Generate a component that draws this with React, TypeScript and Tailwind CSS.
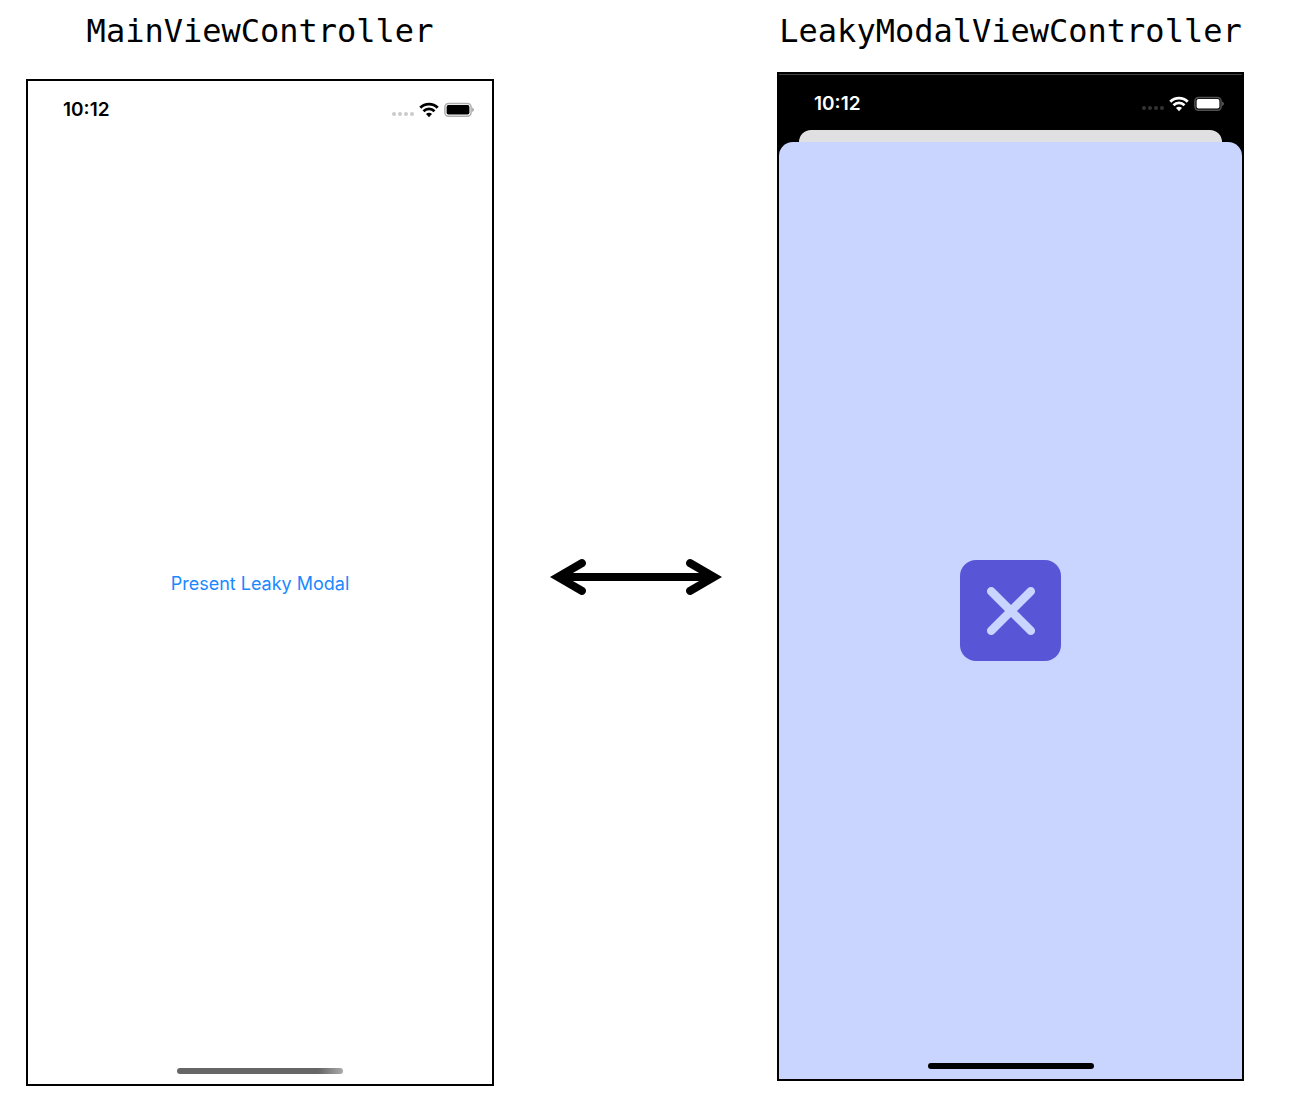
import type { ReactNode } from "react";

function Battery() {
  return (
    <svg width="30" height="16" viewBox="0 0 30 16" aria-label="Battery full" role="img">
      <rect x="0.9" y="1.4" width="26.2" height="12.8" rx="3.6" fill="none" stroke="currentColor" strokeOpacity="0.32" strokeWidth="1.5" />
      <rect x="2.6" y="3.1" width="22.8" height="9.4" rx="1.8" fill="currentColor" />
      <path d="M28.3 5.6 C30.2 6.4 30.2 9.2 28.3 10 Z" fill="currentColor" fillOpacity="0.45" />
    </svg>
  );
}

function Wifi() {
  return (
    <svg width="20" height="16" viewBox="0 0 20 16" fill="none" stroke="currentColor" aria-label="Wi-Fi" role="img">
      <path d="M1.3 5.8 A12.2 12.2 0 0 1 18.7 5.8" strokeWidth="2.9" />
      <path d="M4.5 9.2 A7.7 7.7 0 0 1 15.5 9.2" strokeWidth="2.7" />
      <path d="M10 15.2 L7 12.1 A4.2 4.2 0 0 1 13 12.1 Z" fill="currentColor" stroke="none" />
    </svg>
  );
}

function StatusBar() {
  return (
    <div className="flex shrink-0 items-center justify-between pt-[17px] pr-[18px] pb-[14px] pl-[35px]">
      <time className="text-[19px] leading-6 font-semibold">10:12</time>
      <div className="flex items-center">
        <div className="mt-2 mr-[5px] flex gap-[2px] opacity-20">
          <span className="size-1 rounded-full bg-current" />
          <span className="size-1 rounded-full bg-current" />
          <span className="size-1 rounded-full bg-current" />
          <span className="size-1 rounded-full bg-current" />
        </div>
        <Wifi />
        <div className="ml-[5px]">
          <Battery />
        </div>
      </div>
    </div>
  );
}

function Title({ children }: { children: ReactNode }) {
  return (
    <h2 className="flex justify-center font-['DejaVu_Sans_Mono',monospace] text-[32px] leading-10 whitespace-nowrap">
      {children}
    </h2>
  );
}

function Arrow() {
  return (
    <svg width="172" height="40" viewBox="0 0 172 40" role="img" aria-label="Presents and dismisses">
      <path d="M12 20 H160" stroke="#000" strokeWidth="8" />
      <path d="M0 20 L30.5 2.3 A4.1 4.1 0 0 1 34.6 9.2 L16 20 L34.6 30.8 A4.1 4.1 0 0 1 30.5 37.7 Z" />
      <path d="M172 20 L141.5 2.3 A4.1 4.1 0 0 0 137.4 9.2 L156 20 L137.4 30.8 A4.1 4.1 0 0 0 141.5 37.7 Z" />
    </svg>
  );
}

export default function App() {
  return (
    <main className="grid grid-cols-[468fr_283fr_467fr] bg-white pt-[11px] pr-16 pb-[9px] pl-[26px] font-[Inter,sans-serif] text-black">
      <Title>MainViewController</Title>
      <div />
      <Title>LeakyModalViewController</Title>

      <section className="mt-7 flex aspect-[468/1007] flex-col border-2 border-black">
        <StatusBar />
        <div className="flex flex-1 items-center justify-center pb-9">
          <button type="button" className="text-lg leading-6 text-[#1a88ff]">
            Present Leaky Modal
          </button>
        </div>
        <div className="mx-auto mb-[10px] h-[6px] w-[166px] rounded-full bg-linear-to-r from-[#666] from-85% to-[#aaa]" />
      </section>

      <div className="flex items-center justify-center pt-4">
        <Arrow />
      </div>

      <section className="mt-[21px] flex aspect-[467/1009] flex-col self-start border-2 border-black bg-black">
        <div className="border-t border-neutral-700 text-white">
          <StatusBar />
        </div>
        <div className="mx-5 h-3 rounded-t-xl bg-[#e0dfe1]" />
        <div className="flex flex-1 flex-col rounded-t-[14px] bg-[#c9d4ff]">
          <div className="flex flex-1 items-center justify-center pt-4">
            <button type="button" aria-label="Close" className="flex size-[101px] items-center justify-center rounded-2xl bg-[#5856d6]">
              <svg width="50" height="50" viewBox="0 0 50 50" fill="none" stroke="#c9d4ff" strokeWidth="8.5" strokeLinecap="round">
                <path d="M5.2 5.2 L44.8 44.8 M44.8 5.2 L5.2 44.8" />
              </svg>
            </button>
          </div>
          <div className="mx-auto mb-[10px] h-[6px] w-[166px] rounded-full bg-black" />
        </div>
      </section>
    </main>
  );
}
